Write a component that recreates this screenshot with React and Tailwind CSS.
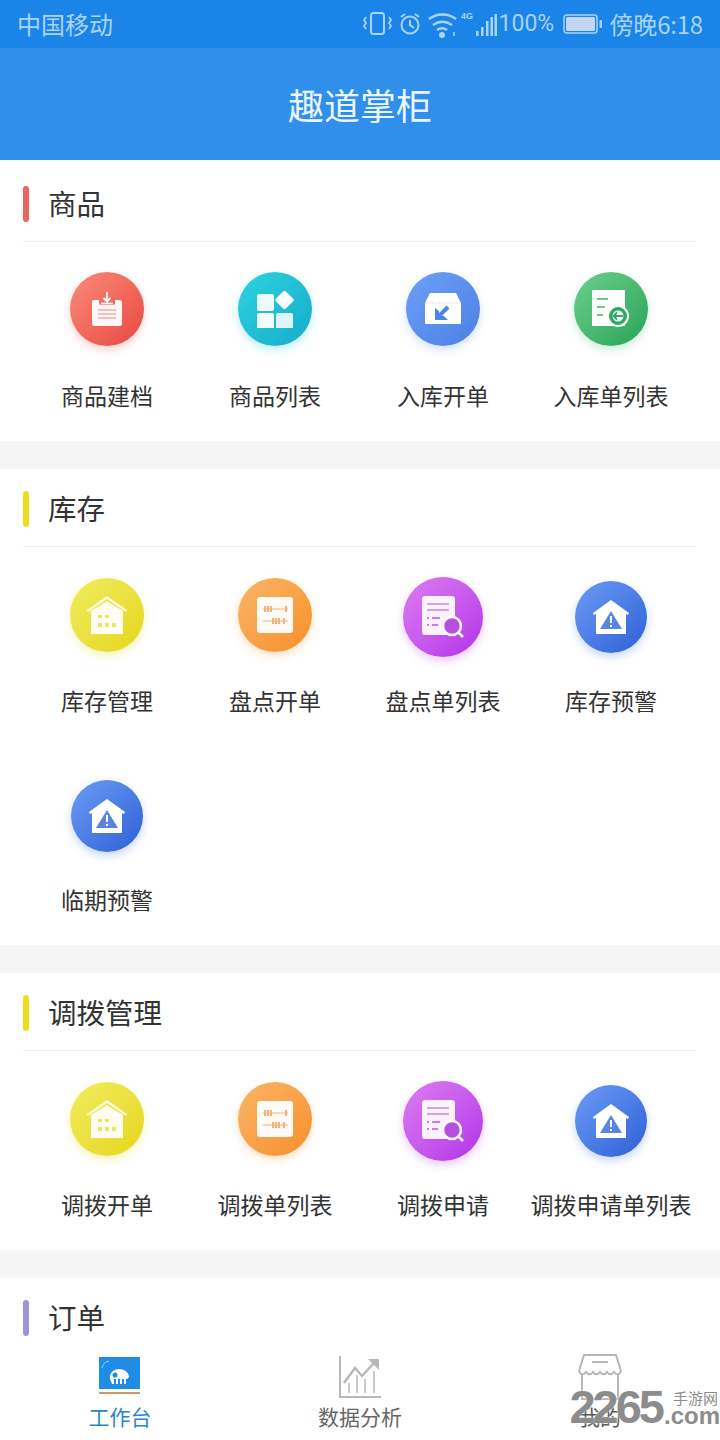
const cjk = "font-['Noto_Sans_CJK_SC','Noto_Sans',sans-serif]";

function RedIcon() {
  return (
    <svg width="34" height="36" viewBox="0 0 34 36">
      <path d="M2 11a2 2 0 0 1 2-2h5v3a2 2 0 0 0 2 2h12a2 2 0 0 0 2-2V9h5a2 2 0 0 1 2 2v22a2 2 0 0 1-2 2H4a2 2 0 0 1-2-2Z" fill="#fff" opacity=".95" />
      <path d="M17 1v9M13.500 7 17 10.500 20.500 7" stroke="#fff" strokeWidth="1.800" fill="none" />
      <path d="M11 12.500h12" stroke="#fff" strokeWidth="1.800" />
      <path d="M8 19h18M8 23h18M8 27h18" stroke="#f08a82" strokeWidth="1.200" />
    </svg>
  );
}

function TealIcon() {
  return (
    <svg width="38" height="38" viewBox="0 0 38 38" fill="#fff">
      <rect x="1" y="4" width="17" height="17" rx="2" opacity=".92" />
      <rect x="1" y="23" width="17" height="16" rx="2" opacity=".95" />
      <rect x="20" y="23" width="17" height="16" rx="2" opacity=".85" />
      <rect x="21.500" y="3" width="14" height="14" rx="2" transform="rotate(45 28.500 10)" />
    </svg>
  );
}

function BoxIcon() {
  return (
    <svg width="38" height="34" viewBox="0 0 38 34">
      <path d="M6 1h26l5 10v20a1 1 0 0 1-1 1H2a1 1 0 0 1-1-1V11Z" fill="#fff" />
      <path d="M2 11h34" stroke="#d5e0f8" strokeWidth="1" strokeDasharray="2 1" />
      <path d="M24 15 14 25" stroke="#4f84e6" strokeWidth="4" />
      <path d="M11 16v12h13l-4-4h-5v-5Z" fill="#4f84e6" />
    </svg>
  );
}

function GreenIcon() {
  return (
    <svg width="40" height="40" viewBox="0 0 40 40">
      <rect x="1" y="1" width="33" height="36" rx="1" fill="#fff" />
      <path d="M6 10h11M6 18h8M6 26h6" stroke="#3fb56c" strokeWidth="1.500" />
      <circle cx="27" cy="27" r="11" fill="#fff" />
      <circle cx="27" cy="27" r="8.500" fill="#2fa962" stroke="#2fa962" />
      <circle cx="27" cy="27" r="5.500" fill="#fff" />
      <path d="M32 27h-9M26 23.500 22.500 27l3.500 3.500" stroke="#2fa962" strokeWidth="1.800" fill="none" />
    </svg>
  );
}

function HouseIcon() {
  return (
    <svg width="42" height="40" viewBox="0 0 42 40">
      <path d="M1 15 21 1l20 14-1 2L21 4 2 17Z" fill="#fff" opacity=".85" />
      <path d="M5 16 21 6l16 10v23H5Z" fill="#fff" opacity=".92" />
      <path d="M12 20h4v3h-4ZM19 20h4v3h-4ZM12 28h4v4h-4ZM19 28h4v4h-4ZM26 28h4v4h-4Z" fill="#e6df4c" opacity=".8" />
    </svg>
  );
}

function AbacusIcon() {
  return (
    <svg width="36" height="36" viewBox="0 0 36 36">
      <rect width="36" height="36" rx="3" fill="#fff" opacity=".95" />
      <path d="M6 12h25M6 24h25" stroke="#f4b274" strokeWidth="1.200" />
      <path d="M8 9v6M11 9v6M14 9v6M29 9v6M16 21v6M19 21v6M22 21v6M27 21v6" stroke="#f4b274" strokeWidth="2" />
    </svg>
  );
}

function SearchIcon() {
  return (
    <svg width="44" height="44" viewBox="0 0 44 44">
      <rect x="1" y="1" width="33" height="39" rx="3" fill="#fff" opacity=".92" />
      <path d="M6 9h22M6 15h22" stroke="#d7a0ec" strokeWidth="2" />
      <path d="M6 23h2M11 23h8M6 30h2M11 30h6" stroke="#cc7ae8" strokeWidth="2" />
      <circle cx="31" cy="31" r="9" fill="#b64fe0" stroke="#fff" strokeWidth="2.500" />
      <path d="m37 37 5 5" stroke="#fff" strokeWidth="2.500" />
    </svg>
  );
}

function WarnIcon() {
  return (
    <svg width="38" height="36" viewBox="0 0 38 36">
      <path d="M19 1 37 14l-1 2-2-1v20H4V15l-2 1-1-2Z" fill="#fff" />
      <path d="M19 12 30 30H8Z" fill="#5a84e2" />
      <path d="M19 17v7M19 26v2" stroke="#fff" strokeWidth="2" />
    </svg>
  );
}

const RED = { icon: <RedIcon />, circle: "size-[74px] mb-[2px] from-[#f98a7a] to-[#e8453f] shadow-[0_4px_8px_rgba(240,90,80,0.28)]" };
const TEAL = { icon: <TealIcon />, circle: "size-[74px] mb-[2px] from-[#2dd3e0] to-[#16abc9] shadow-[0_4px_8px_rgba(30,200,220,0.28)]" };
const BOX = { icon: <BoxIcon />, circle: "size-[74px] mb-[2px] from-[#6ea0f5] to-[#4a7fe6] shadow-[0_4px_8px_rgba(80,130,240,0.25)]" };
const GREEN = { icon: <GreenIcon />, circle: "size-[74px] mb-[2px] from-[#6cd08c] to-[#22a358] shadow-[0_4px_8px_rgba(60,190,110,0.25)]" };
const YELLOW = { icon: <HouseIcon />, circle: "size-[74px] from-[#f0ec5c] to-[#e6d60e] shadow-[0_4px_8px_rgba(230,220,40,0.3)]" };
const ORANGE = { icon: <AbacusIcon />, circle: "size-[74px] from-[#fab566] to-[#f78f24] shadow-[0_4px_8px_rgba(250,160,70,0.3)]" };
const PURPLE = { icon: <SearchIcon />, circle: "size-[80px] mt-[3px] from-[#dc7cf0] to-[#b42ee8] shadow-[0_4px_8px_rgba(190,80,240,0.3)]" };
const BLUE = { icon: <WarnIcon />, circle: "size-[72px] mt-[3px] from-[#6c9cf4] to-[#2f5fd6] shadow-[0_4px_8px_rgba(70,120,230,0.3)]" };

const sections = [
  {
    title: "商品",
    bar: "bg-[#e8675f]",
    header: "h-[82px]",
    items: [
      ["商品建档", RED],
      ["商品列表", TEAL],
      ["入库开单", BOX],
      ["入库单列表", GREEN],
    ],
  },
  {
    title: "库存",
    bar: "bg-[#f0dc1c]",
    header: "h-[78px]",
    items: [
      ["库存管理", YELLOW],
      ["盘点开单", ORANGE],
      ["盘点单列表", PURPLE],
      ["库存预警", BLUE],
      ["临期预警", BLUE],
    ],
  },
  {
    title: "调拨管理",
    bar: "bg-[#f0dc1c]",
    header: "h-[78px]",
    items: [
      ["调拨开单", YELLOW],
      ["调拨单列表", ORANGE],
      ["调拨申请", PURPLE],
      ["调拨申请单列表", BLUE],
    ],
  },
  { title: "订单", bar: "bg-[#a093d8]", header: "h-[78px]", items: [] },
];

function Section({ section }) {
  return (
    <section className="bg-white pl-[23px] pr-[24px] mb-[28px]">
      <div className={`flex items-end gap-[20px] border-b border-[#ececec] pb-[19px] ${section.header}`}>
        <span className={`w-[6px] h-[36px] rounded-full ${section.bar}`} />
        <h2 className="text-[28.5px] leading-[38px] text-[#333] -ml-[1px]">{section.title}</h2>
      </div>
      {section.items.length > 0 && (
        <div className="grid grid-cols-4 w-[672px]">
          {section.items.map(([label, item]) => (
            <div key={label} className="flex flex-col items-center h-[199px]">
              <div className="h-[92px] mt-[22px] flex items-center justify-center">
                <div className={`rounded-full bg-linear-to-br flex items-center justify-center ${item.circle}`}>
                  {item.icon}
                </div>
              </div>
              <span className="mt-[22px] text-[23px] leading-[34px] text-[#333] whitespace-nowrap">{label}</span>
            </div>
          ))}
        </div>
      )}
    </section>
  );
}

function StatusIcons() {
  return (
    <svg width="98" height="28" viewBox="0 0 98 28" fill="none" stroke="#a9d3f8" strokeWidth="2">
      {/* vibrate */}
      <rect x="8" y="3" width="13" height="21" rx="2.500" />
      <path d="M3 7 1 10l2 3-2 3 2 3M26 7l2 3-2 3 2 3-2 3" strokeWidth="1.800" />
      {/* alarm */}
      <circle cx="47" cy="15" r="8.500" />
      <path d="M47 10v5l4 3M38 7l4-3M56 7l-4-3" />
      {/* wifi */}
      <path d="M66 9c8-6 19-6 27 0M70 15c6-4 13-4 19 0M74 20c3-2 7-2 10 0" strokeWidth="2.500" />
      <circle cx="79" cy="25" r="2" fill="#a9d3f8" />
      <path d="M91 22v4" strokeWidth="1.500" />
    </svg>
  );
}

function Signal() {
  return (
    <svg width="36" height="28" viewBox="0 0 36 28" fill="#a9d3f8">
      <text x="0" y="9" fontSize="9" fontWeight="700" fontFamily="Liberation Sans">4G</text>
      <rect x="15" y="21" width="2.500" height="5" />
      <rect x="20" y="17" width="2.500" height="9" />
      <rect x="25" y="11" width="2.500" height="15" />
      <rect x="29.500" y="7" width="2.500" height="19" />
      <rect x="33.500" y="4" width="2.500" height="22" />
    </svg>
  );
}

function Battery() {
  return (
    <svg width="40" height="20" viewBox="0 0 40 20">
      <rect x="1" y="1" width="33" height="18" rx="3" fill="none" stroke="#a9d3f8" strokeWidth="1.500" />
      <rect x="3" y="3" width="29" height="14" rx="1.500" fill="#c4d4f4" />
      <rect x="36.500" y="6" width="2.500" height="8" rx="1" fill="#a9d3f8" />
    </svg>
  );
}

function WorkIcon() {
  return (
    <svg width="44" height="40" viewBox="0 0 44 40">
      <rect x="1" y="0" width="41" height="32" fill="#1f8ce6" />
      <path d="M4 11C5 7 7 5 11 4" stroke="#9fd2f8" strokeWidth="1" fill="none" />
      <path d="M12 22c-1-6 4-10 9-10 6 0 10 4 10 8l-2 2h-1v5h-2v-5h-2v5h-2v-5h-2v5h-2v-5h-2v5h-2Z" fill="#fff" />
      <circle cx="17" cy="18" r="2.500" fill="#1f8ce6" />
      <rect x="1" y="35" width="41" height="2" fill="#d09a68" />
    </svg>
  );
}

function ChartIcon() {
  return (
    <svg width="44" height="44" viewBox="0 0 44 44" fill="none" stroke="#b8b8b8">
      <path d="M2 1v41h41" strokeWidth="2" />
      <path d="M6 28 17 13l7 8 12-13" strokeWidth="2.500" />
      <path d="M30 4h11v11Z" fill="#b8b8b8" strokeWidth="0" />
      <path d="M11 38V28M19 38V20M27 38V24M36 38V16" strokeWidth="1.500" />
    </svg>
  );
}

function ShopIcon() {
  return (
    <svg width="44" height="46" viewBox="0 0 44 46" fill="none" stroke="#b8b8b8" strokeWidth="2">
      <path d="M6 1h32l5 16c-1 4-5 4-7 1-2 3-5 3-7 0-2 3-5 3-7 0-2 3-5 3-7 0-2 3-5 3-7 0-2 3-6 3-7-1Z" />
      <path d="M14 8h16M4 20v25h36V20" />
    </svg>
  );
}

const tabs = [
  { label: "工作台", icon: <WorkIcon />, color: "text-[#2b87c9]" },
  { label: "数据分析", icon: <ChartIcon />, color: "text-[#666]" },
  { label: "我的", icon: <ShopIcon />, color: "text-[#555]" },
];

export default function App() {
  return (
    <div className={`relative w-[720px] h-[1440px] flex flex-col overflow-hidden bg-[#f5f5f5] ${cjk}`}>
      <div className="h-[48px] shrink-0 bg-[#1a84e8] flex items-center justify-between pl-[17px] pr-[17px] text-[24px] text-[#a9d3f8]">
        <span>中国移动</span>
        <div className="flex items-center">
          <StatusIcons />
          <Signal />
          <span className="ml-[2px] w-[60px] text-[23px] font-['Roboto',sans-serif]">100%</span>
          <span className="ml-[4px]"><Battery /></span>
          <span className="ml-[7px] tracking-[-0.2px]">傍晚6:18</span>
        </div>
      </div>
      <header className="h-[112px] shrink-0 bg-[#2f8fea] flex items-center justify-center text-[36px] text-[#eaf5ff]">
        趣道掌柜
      </header>
      <main className="flex-1 overflow-hidden">
        {sections.map((section) => (
          <Section key={section.title} section={section} />
        ))}
      </main>
      <nav className="h-[96px] shrink-0 bg-white grid grid-cols-3">
        {tabs.map((tab) => (
          <div key={tab.label} className="flex flex-col items-center">
            <div className="h-[50px] mt-[8px] flex items-center justify-center">{tab.icon}</div>
            <span className={`text-[21px] leading-[28px] ${tab.color}`}>{tab.label}</span>
          </div>
        ))}
      </nav>
      {/* 2265 watermark */}
      <div className="absolute right-0 bottom-[15px] flex items-end text-[#8c8c8c] font-['Liberation_Sans',sans-serif] font-bold [text-shadow:0_0_2px_#fff]">
        <span className="text-[47px] leading-[36px] tracking-[-3px]">2265</span>
        <div className="flex flex-col items-end w-[58px]">
          <span className={`text-[15px] leading-[18px] font-normal mr-[2px] ${cjk}`}>手游网</span>
          <span className="text-[24px] leading-[18px]">.com</span>
        </div>
      </div>
    </div>
  );
}
